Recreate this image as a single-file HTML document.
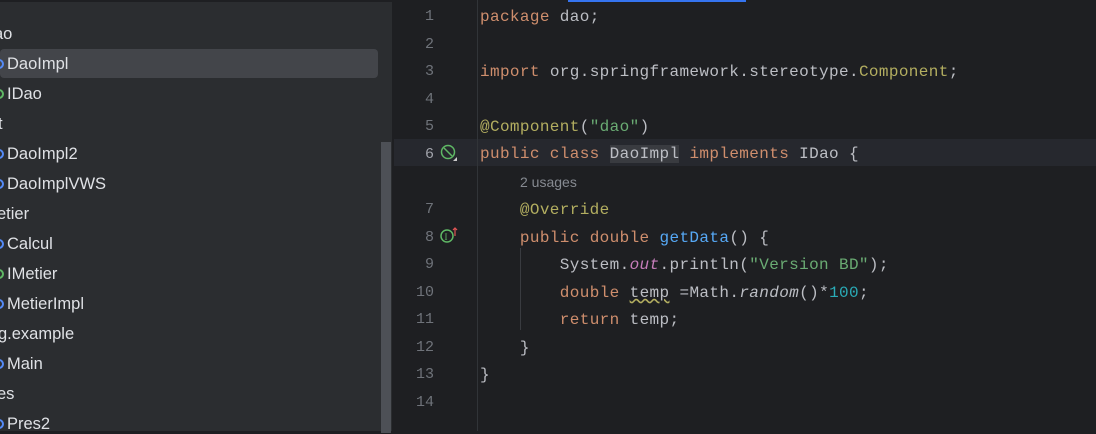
<!DOCTYPE html><html><head><style>
*{margin:0;padding:0;box-sizing:border-box}
body{width:1096px;height:431px;overflow:hidden;background:#1e1f22;position:relative;font-family:"Liberation Sans",sans-serif}
#side{position:absolute;left:0;top:0;width:392px;height:431px;background:#2b2d30;border-top:2px solid #1e1f22}
.t{position:absolute;left:7px;font-size:16.5px;color:#dfe1e5;line-height:20px}
.ic{position:absolute;left:-13px;width:10px;height:10px;border-radius:50%;border:2px solid #548af7}
.g{border-color:#5fb865}
#sel{position:absolute;left:0;top:47px;width:378px;height:29px;background:#43454a;border-radius:4px}
#sb{position:absolute;left:381px;top:140px;width:10px;height:291px;background:#4d5056}
#ed{position:absolute;left:394px;top:0;width:702px;height:431px;background:#1e1f22;font-family:"Liberation Mono",monospace;font-size:16px}
.n{position:absolute;left:0;width:40px;text-align:right;color:#6f737a;font-size:15px}
.c{position:absolute;left:86px;white-space:pre;color:#bcbec4;letter-spacing:0.37px}
.k{color:#cf8e6d}.a{color:#b3ae60}.s{color:#6aab73}.f{color:#56a8f5}.i{color:#c77dbb;font-style:italic}.num{color:#2aacb8}
</style></head><body>
<div id="side">
<div id="sel"></div>
<div class="t" style="left:-6px;top:22px">ao</div>
<div class="t" style="top:52px"><span class="ic" style="top:5px"></span>DaoImpl</div>
<div class="t" style="top:82px"><span class="ic g" style="top:5px"></span>IDao</div>
<div class="t" style="left:-2px;top:112px">t</div>
<div class="t" style="top:142px"><span class="ic" style="top:5px"></span>DaoImpl2</div>
<div class="t" style="top:172px"><span class="ic" style="top:5px"></span>DaoImplVWS</div>
<div class="t" style="left:-3px;top:202px">etier</div>
<div class="t" style="top:232px"><span class="ic" style="top:5px"></span>Calcul</div>
<div class="t" style="top:262px"><span class="ic g" style="top:5px"></span>IMetier</div>
<div class="t" style="top:292px"><span class="ic" style="top:5px"></span>MetierImpl</div>
<div class="t" style="left:-2px;top:322px">g.example</div>
<div class="t" style="top:352px"><span class="ic" style="top:5px"></span>Main</div>
<div class="t" style="left:-3px;top:382px">es</div>
<div class="t" style="top:412px"><span class="ic" style="top:5px"></span>Pres2</div>
<div id="sb"></div>
</div>
<div id="ed">
<div style="position:absolute;left:174px;top:0;width:178px;height:2px;background:#3574f0"></div>
<div style="position:absolute;left:0;top:139px;width:702px;height:27px;background:#26282e"></div>
<div style="position:absolute;left:83px;top:0;width:1px;height:431px;background:#313438"></div>
<div style="position:absolute;left:126px;top:248px;width:1px;height:82px;background:#393b40"></div>
<div class="n" style="top:8px">1</div><div class="n" style="top:36px">2</div><div class="n" style="top:63px">3</div><div class="n" style="top:91px">4</div><div class="n" style="top:118px">5</div><div class="n" style="top:146px;color:#a1a3ab">6</div><div class="n" style="top:201px">7</div><div class="n" style="top:229px">8</div><div class="n" style="top:256px">9</div><div class="n" style="top:284px">10</div><div class="n" style="top:311px">11</div><div class="n" style="top:339px">12</div><div class="n" style="top:366px">13</div><div class="n" style="top:394px">14</div>
<svg style="position:absolute;left:46px;top:144px" width="18" height="18"><circle cx="8" cy="8" r="6.5" fill="none" stroke="#5fb865" stroke-width="1.5"/><line x1="4" y1="4" x2="12" y2="12" stroke="#5fb865" stroke-width="1.5"/><path d="M17 13 L17 17 L13 17Z" fill="#ccc"/></svg>
<svg style="position:absolute;left:46px;top:227px" width="20" height="18"><circle cx="7" cy="9" r="6" fill="none" stroke="#5fb865" stroke-width="1.5"/><text x="4.5" y="13" font-size="9" fill="#5fb865" font-family="Liberation Serif">I</text><path d="M15 1 L15 9 M13 3 L15 1 L17 3" stroke="#e05555" stroke-width="1.2" fill="none"/></svg>
<div class="c" style="top:8px"><span class="k">package</span> dao;</div>
<div class="c" style="top:63px"><span class="k">import</span> org.springframework.stereotype.<span class="a">Component</span>;</div>
<div class="c" style="top:118px"><span class="a">@Component</span>(<span class="s">"dao"</span>)</div>
<div class="c" style="top:145px"><span class="k">public class</span> <span style="background:#393b40">DaoImpl</span> <span class="k">implements</span> IDao {</div>
<div class="c" style="top:174px;left:126px;font-family:'Liberation Sans',sans-serif;font-size:14px;color:#868a91;letter-spacing:0">2 usages</div>
<div class="c" style="top:201px"><span class="a">    @Override</span></div>
<div class="c" style="top:229px">    <span class="k">public double</span> <span class="f">getData</span>() {</div>
<div class="c" style="top:256px">        System.<span class="i">out</span>.println(<span class="s">"Version BD"</span>);</div>
<div class="c" style="top:284px">        <span class="k">double</span> <span style="text-decoration:underline wavy #b3ae60">temp</span> =Math.<i>random</i>()*<span class="num">100</span>;</div>
<div class="c" style="top:311px">        <span class="k">return</span> temp;</div>
<div class="c" style="top:339px">    }</div>
<div class="c" style="top:366px">}</div>
</div>
</body></html>
